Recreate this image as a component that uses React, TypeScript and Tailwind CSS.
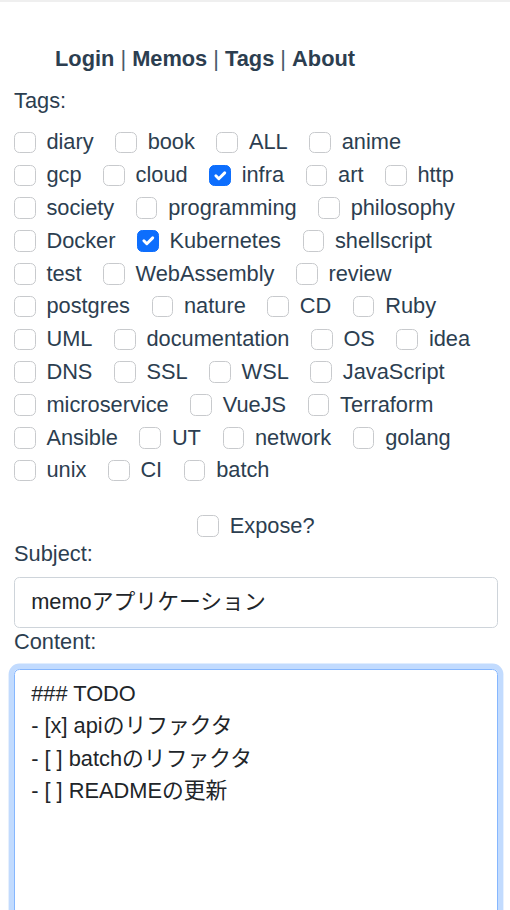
import React from "react";

const rows: { name: string; checked?: boolean }[][] = [
  [{ name: "diary" }, { name: "book" }, { name: "ALL" }, { name: "anime" }],
  [{ name: "gcp" }, { name: "cloud" }, { name: "infra", checked: true }, { name: "art" }, { name: "http" }],
  [{ name: "society" }, { name: "programming" }, { name: "philosophy" }],
  [{ name: "Docker" }, { name: "Kubernetes", checked: true }, { name: "shellscript" }],
  [{ name: "test" }, { name: "WebAssembly" }, { name: "review" }],
  [{ name: "postgres" }, { name: "nature" }, { name: "CD" }, { name: "Ruby" }],
  [{ name: "UML" }, { name: "documentation" }, { name: "OS" }, { name: "idea" }],
  [{ name: "DNS" }, { name: "SSL" }, { name: "WSL" }, { name: "JavaScript" }],
  [{ name: "microservice" }, { name: "VueJS" }, { name: "Terraform" }],
  [{ name: "Ansible" }, { name: "UT" }, { name: "network" }, { name: "golang" }],
  [{ name: "unix" }, { name: "CI" }, { name: "batch" }],
];

function Box({ checked }: { checked?: boolean }) {
  return (
    <span
      className={
        "mt-[5.4px] flex h-[21.6px] w-[21.6px] shrink-0 items-center justify-center rounded-[5.4px] border " +
        (checked ? "border-[#0d6efd] bg-[#0d6efd]" : "border-[#c8cacd] bg-white")
      }
    >
      {checked && (
        <svg viewBox="0 0 20 20" className="h-[21.6px] w-[21.6px]">
          <path d="M6 10l3 3l6-6" fill="none" stroke="#fff" strokeWidth="3" strokeLinecap="round" strokeLinejoin="round" />
        </svg>
      )}
    </span>
  );
}

function Check({ name, checked }: { name: string; checked?: boolean }) {
  return (
    <label className="mr-[21.6px] flex h-[32.8px] items-start">
      <Box checked={checked} />
      <span className="ml-[10.8px] leading-[32.4px]">{name}</span>
    </label>
  );
}

export default function App() {
  return (
    <div className="min-h-[910px] overflow-hidden bg-white font-['Liberation_Sans','Noto_Sans_CJK_JP',sans-serif] text-[21.8px] leading-[1.5] text-[#2c3e50]">
      <div className="h-[2px] bg-[#efefef]" />
      <nav className="mt-[41px] pl-[55px] leading-[32.4px]">
        <span className="font-bold">Login</span> <span className="text-[#4a5a6a]">|</span>{" "}
        <span className="font-bold">Memos</span> <span className="text-[#4a5a6a]">|</span>{" "}
        <span className="font-bold">Tags</span> <span className="text-[#4a5a6a]">|</span>{" "}
        <span className="font-bold">About</span>
      </nav>
      <div className="pl-[14px] pr-[12px]">
        <div className="mt-[10px] leading-[32.4px]">Tags:</div>
        <div className="mt-[8.6px] flex flex-col">
          {rows.map((r, i) => (
            <div key={i} className="flex">
              {r.map((t) => (
                <Check key={t.name} name={t.name} checked={t.checked} />
              ))}
            </div>
          ))}
        </div>
        <div className="mt-[22.4px] flex h-[28px] justify-center">
          <label className="flex items-start">
            <Box />
            <span className="ml-[10.8px] leading-[32.4px]">Expose?</span>
          </label>
        </div>
        <div className="leading-[32.4px]">Subject:</div>
        <div className="mt-[7px] h-[50.6px] rounded-[5.4px] border border-[#ced4da] px-[16.2px] py-[8.1px] leading-[32.4px] text-[#212529]">
          memoアプリケーション
        </div>
        <div className="mt-[-2px] leading-[32.4px]">Content:</div>
        <div className="mt-[11px] h-[320px] rounded-[5.4px] border border-[#86b7fe] px-[16.2px] py-[8.1px] leading-[32.4px] text-[#212529] shadow-[0_0_0_5.4px_rgba(13,110,253,0.25)]">
          <div>### TODO</div>
          <div>- [x] apiのリファクタ</div>
          <div>- [ ] batchのリファクタ</div>
          <div>- [ ] READMEの更新</div>
        </div>
      </div>
    </div>
  );
}
